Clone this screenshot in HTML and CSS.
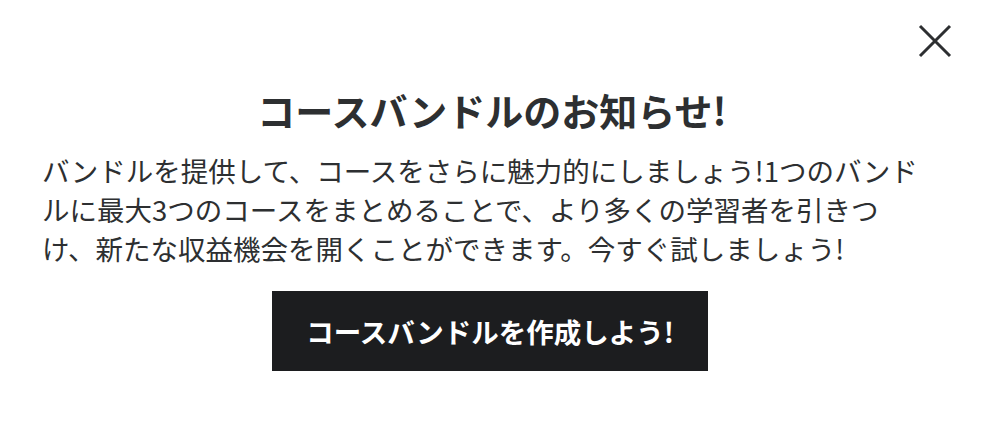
FILE: index.html
```html
<!DOCTYPE html>
<html lang="ja">
<head>
<meta charset="utf-8">
<title>コースバンドルのお知らせ!</title>
<link rel="stylesheet" href="styles.css">
</head>
<body>
<div class="modal">
  <button class="close" aria-label="閉じる">
    <svg width="34" height="34" viewBox="0 0 34 34" aria-hidden="true">
      <path d="M2 2 L32 32 M32 2 L2 32" stroke="#2d2f31" stroke-width="3" stroke-linecap="butt" fill="none"/>
    </svg>
  </button>
  <h2 class="title">コースバンドルのお知らせ!</h2>
  <p class="body">バンドルを提供して、コースをさらに魅力的にしましょう!1つのバンド<br>ルに最大3つのコースをまとめることで、より多くの学習者を引きつ<br>け、新たな収益機会を開くことができます。今すぐ試しましょう!</p>
  <div class="actions">
    <button class="cta">コースバンドルを作成しよう!</button>
  </div>
</div>
</body>
</html>
```
FILE: styles.css
```css
html, body {
  margin: 0;
  padding: 0;
  background: #ffffff;
}
body {
  font-family: "Noto Sans CJK JP", "Noto Sans", sans-serif;
  color: #2d2f31;
}
.modal {
  position: relative;
  width: 988px;
  height: 430px;
  box-sizing: border-box;
  padding: 88px 42px 0;
}
.close {
  position: absolute;
  top: 24px;
  right: 36px;
  width: 34px;
  height: 34px;
  padding: 0;
  border: 0;
  background: transparent;
  display: flex;
  align-items: center;
  justify-content: center;
}
.title {
  margin: 0;
  padding-right: 4px;
  text-align: center;
  font-size: 38px;
  line-height: 44px;
  font-weight: 700;
  color: #2d2f31;
}
.body {
  margin: 19px 0 0;
  font-size: 27.5px;
  line-height: 39px;
  font-weight: 400;
  color: #2d2f31;
  white-space: nowrap;
}
.actions {
  display: flex;
  justify-content: center;
  margin-top: 23px;
}
.cta {
  height: 80px;
  padding: 0 34px;
  border: 0;
  background: #1c1d1f;
  color: #ffffff;
  font-family: "Noto Sans CJK JP", "Noto Sans", sans-serif;
  font-size: 27.5px;
  font-weight: 700;
  margin-left: -8px;
}
```
